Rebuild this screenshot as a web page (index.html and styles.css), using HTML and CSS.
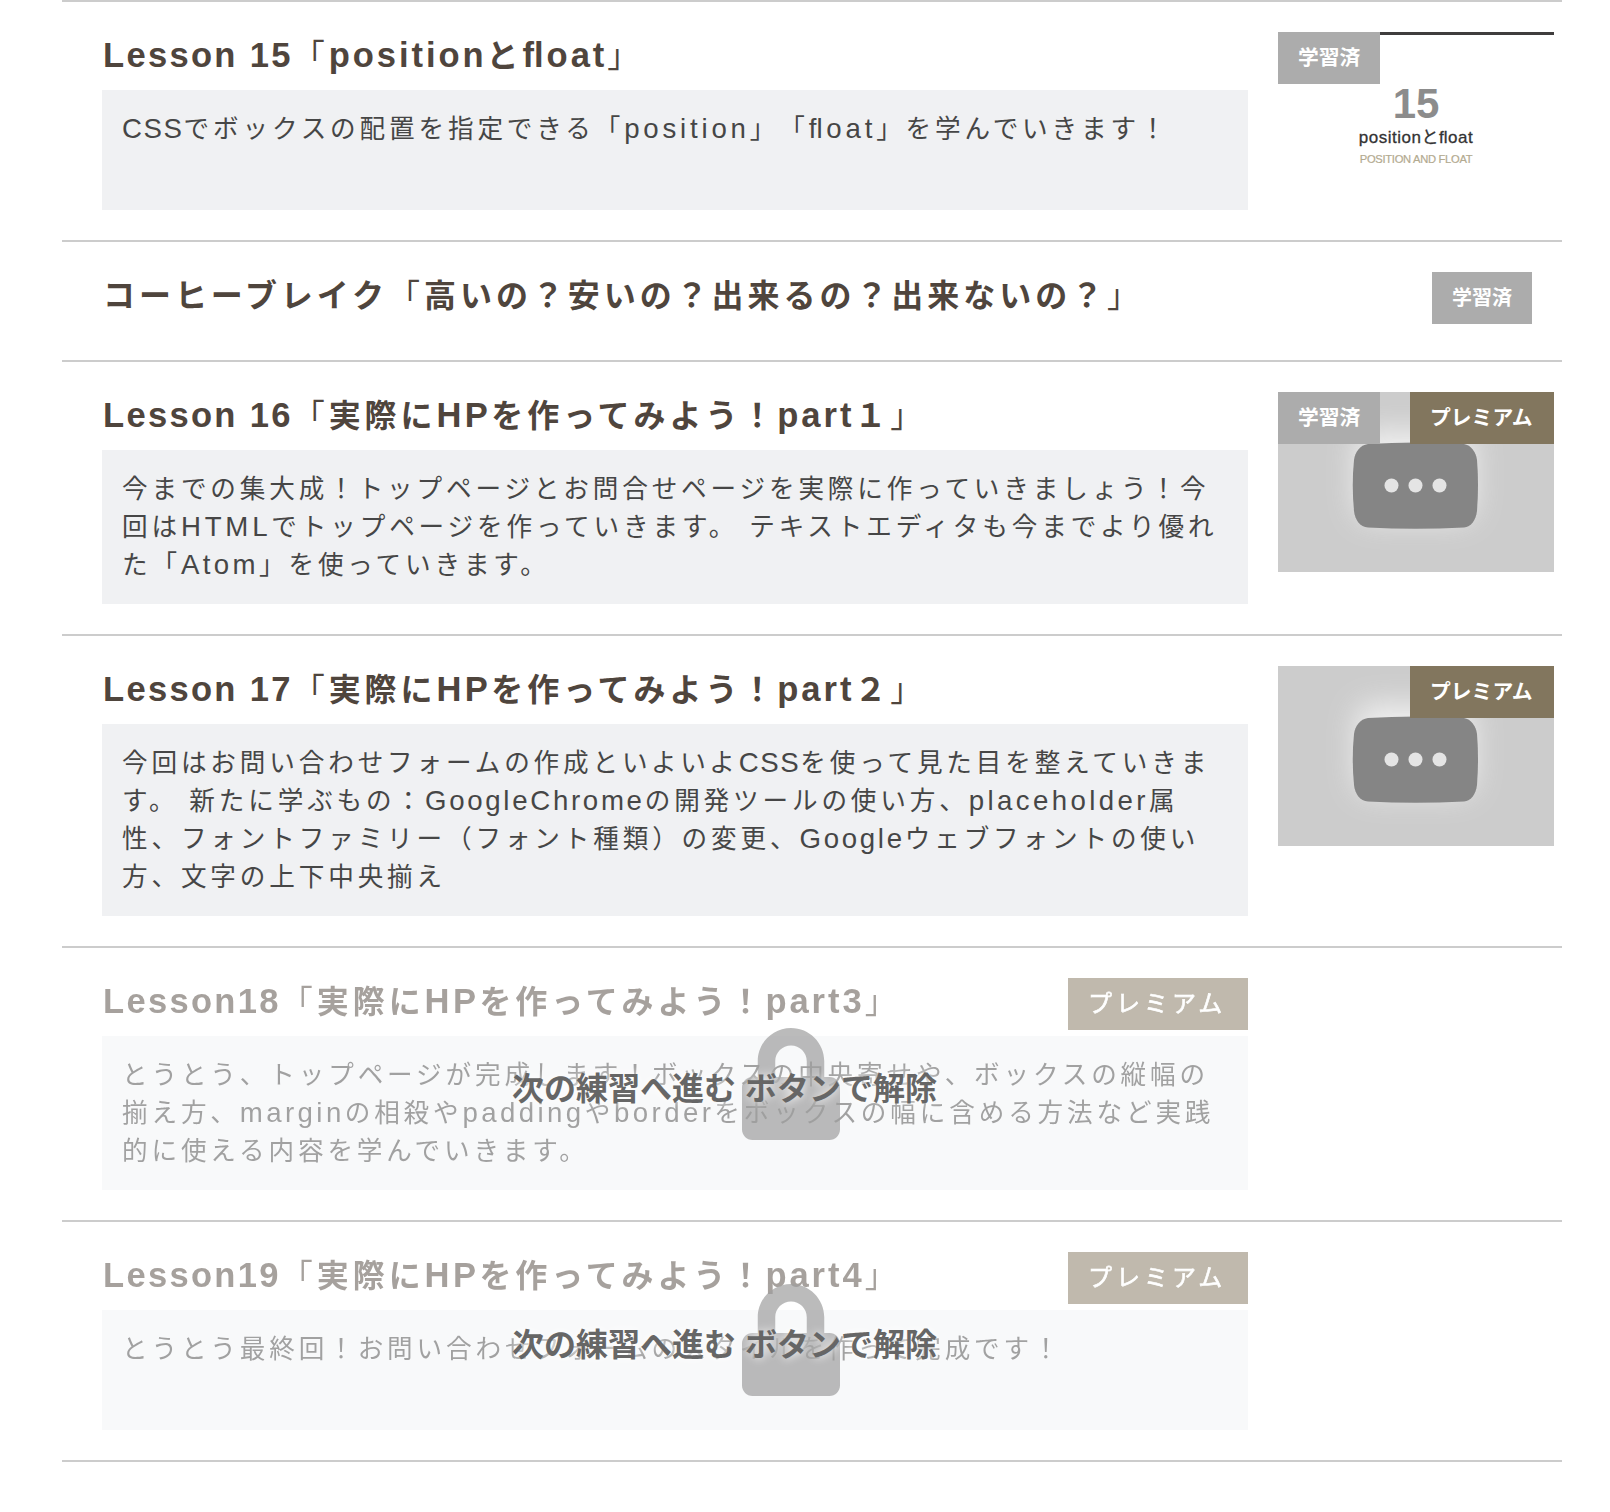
FILE: index.html
```html
<!DOCTYPE html>
<html lang="ja">
<head>
<meta charset="utf-8">
<title>Lesson</title>
<link rel="stylesheet" href="styles.css">
</head>
<body>
<svg width="0" height="0" class="defs" aria-hidden="true">
  <defs>
    <filter id="glow" x="-50%" y="-50%" width="200%" height="200%"><feGaussianBlur stdDeviation="15"/></filter>
    <filter id="soft" x="-10%" y="-10%" width="120%" height="120%"><feGaussianBlur stdDeviation="0.7"/></filter>
    <symbol id="video" viewBox="0 0 276 180">
      <rect width="276" height="180" fill="#ccc"/>
      <rect x="78" y="38" width="118" height="90" rx="16" fill="#fff" opacity=".7" filter="url(#glow)"/>
      <path d="M90 52Q137 49 186 52C193 53 198 60 199 68Q201 93 199 119C198 128 193 135 186 135.500Q137 138 90 135.500C82 135 77 128 76 119Q73.500 93 76 68C77 60 82 53 90 52Z" fill="#858585" filter="url(#soft)"/>
      <g fill="#e4e4e4" filter="url(#soft)"><circle cx="113.500" cy="93.500" r="7"/><circle cx="137.500" cy="93.500" r="7"/><circle cx="161.500" cy="93.500" r="7"/></g>
    </symbol>
    <symbol id="lock" viewBox="0 0 448 512">
      <path d="M400 224h-24v-72C376 68.200 307.800 0 224 0S72 68.200 72 152v72H48c-26.500 0-48 21.500-48 48v192c0 26.500 21.500 48 48 48h352c26.500 0 48-21.500 48-48V272c0-26.500-21.500-48-48-48zm-104 0H152v-72c0-39.700 32.300-72 72-72s72 32.300 72 72v72z"/>
    </symbol>
  </defs>
</svg>
<main class="lessons">
  <section class="row">
    <div class="main">
      <h2 class="title"><span class="en lead">Lesson 15</span><i>「</i><span class="en">position</span>と<span class="en"><span class="lig">f</span>loat</span><i>」</i></h2>
      <p class="desc"><span class="en caps">CSS</span>でボックスの配置を指定できる「<span class="en spaced">position</span>」「<span class="en spaced"><span class="lig">f</span>loat</span>」を学んでいきます！</p>
    </div>
    <div class="thumb slide">
      <b class="num">15</b>
      <span class="name">positionと<span class="lig">f</span>loat</span>
      <span class="sub">POSITION AND FLOAT</span>
      <span class="badge done">学習済</span>
    </div>
  </section>
  <section class="row">
    <div class="main">
      <h2 class="title">コーヒーブレイク<i>「</i>高いの？安いの？出来るの？出来ないの？<i>」</i></h2>
    </div>
    <span class="badge finished">学習済</span>
  </section>
  <section class="row">
    <div class="main">
      <h2 class="title"><span class="en lead">Lesson 16</span><i>「</i>実際に<span class="en wide">HP</span>を作ってみよう！<span class="en">part</span>１<i>」</i></h2>
      <p class="desc">今までの集大成！トップページとお問合せページを実際に作っていきましょう！今<br>回は<span class="en wide">HTML</span>でトップページを作っていきます。 テキストエディタも今までより優れ<br>た「<span class="en">Atom</span>」を使っていきます。</p>
    </div>
    <div class="thumb">
      <svg width="276" height="180"><use href="#video"/></svg>
      <span class="badge done">学習済</span>
      <span class="badge premium">プレミアム</span>
    </div>
  </section>
  <section class="row">
    <div class="main">
      <h2 class="title"><span class="en lead">Lesson 17</span><i>「</i>実際に<span class="en wide">HP</span>を作ってみよう！<span class="en">part</span>２<i>」</i></h2>
      <p class="desc">今回はお問い合わせフォームの作成といよいよ<span class="en caps">CSS</span>を使って見た目を整えていきま<br>す。 新たに学ぶもの：<span class="en round">GoogleChrome</span>の開発ツールの使い方、<span class="en">placeholder</span>属<br>性、フォントファミリー（フォント種類）の変更、<span class="en round">Google</span>ウェブフォントの使い<br>方、文字の上下中央揃え</p>
    </div>
    <div class="thumb">
      <svg width="276" height="180"><use href="#video"/></svg>
      <span class="badge premium">プレミアム</span>
    </div>
  </section>
  <section class="row locked">
    <div class="main">
      <div class="head"><h2 class="title"><span class="en lead">Lesson18</span><i>「</i>実際に<span class="en wide">HP</span>を作ってみよう！<span class="en">part3</span><i>」</i></h2><span class="tag">プレミアム</span></div>
      <p class="desc">とうとう、トップページが完成します！ボックスの中央寄せや、ボックスの縦幅の<br>揃え方、<span class="en">margin</span>の相殺や<span class="en">padding</span>や<span class="en">border</span>をボックスの幅に含める方法など実践<br>的に使える内容を学んでいきます。</p>
    </div>
    <svg class="lock" width="98" height="112"><use href="#lock"/></svg>
    <p class="notice">次の練習へ進む ボタンで解除</p>
  </section>
  <section class="row locked">
    <div class="main">
      <div class="head"><h2 class="title"><span class="en lead">Lesson19</span><i>「</i>実際に<span class="en wide">HP</span>を作ってみよう！<span class="en">part4</span><i>」</i></h2><span class="tag">プレミアム</span></div>
      <p class="desc">とうとう最終回！お問い合わせフォームのスタイルを作って完成です！</p>
    </div>
    <svg class="lock" width="98" height="112"><use href="#lock"/></svg>
    <p class="notice">次の練習へ進む ボタンで解除</p>
  </section>
</main>
</body>
</html>
```
FILE: styles.css
```css
* { box-sizing: border-box; }
body {
  margin: 0;
  background: #fff;
  font-family: "Liberation Sans", "Noto Sans CJK JP", sans-serif;
  text-spacing-trim: space-all;
  color: #464646;
}
h2, p { margin: 0; }
.defs { position: absolute; }
.lessons { width: 1500px; margin-left: 62px; border-bottom: 2px solid #ccc; }
.row {
  position: relative;
  display: flex;
  align-items: flex-start;
  border-top: 2px solid #ccc;
  padding: 30px 8px 30px 40px;
}
.main { width: 1146px; margin-right: 30px; }
.title {
  height: 58px;
  padding-left: 1px;
  font-size: 32px;
  line-height: 49px;
  letter-spacing: 3.95px;
  color: #4f453d;
  white-space: nowrap;
}
.title i { font-style: normal; font-weight: 400; }
.desc {
  min-height: 120px;
  padding: 20px;
  background: #f0f1f3;
  font-size: 25.6px;
  line-height: 38px;
  letter-spacing: 3.86px;
  white-space: nowrap;
}
.en { font-size: 1.08em; line-height: 1; letter-spacing: 3.4px; }
.caps { letter-spacing: 1.6px; }
.wide { letter-spacing: 3.8px; }
.round { letter-spacing: 2.7px; }
.spaced { letter-spacing: 3.8px; }
.title .en { letter-spacing: 2.95px; }
.title .lead { letter-spacing: 2.3px; }
.title .wide { letter-spacing: 3.4px; }
.lig, .title .lig { letter-spacing: 0; }
.badge {
  height: 52px;
  padding: 0 20px;
  line-height: 52px;
  font-size: 20.8px;
  font-weight: 700;
  color: #fff;
  white-space: nowrap;
}
.thumb { position: relative; width: 276px; height: 180px; flex: none; margin-bottom: -10px; }
.thumb svg { display: block; }
.thumb .badge { position: absolute; top: 0; }
.done { left: 0; width: 102px; background: #acacac; }
.premium { right: 0; width: 144px; background: #82765e; }
.finished { margin: 0 22px 0 auto; background: #acacac; font-size: 20px; }
.slide {
  display: flex;
  flex-direction: column;
  align-items: center;
  border-top: 3px solid #3f3d3d;
  padding-top: 46px;
}
.thumb.slide .badge { top: -3px; }
.num { font-size: 42px; line-height: 46px; color: #8c8c8c; }
.name { font-size: 17px; line-height: 22px; letter-spacing: .5px; color: #333; -webkit-text-stroke: .3px #333; }
.sub { font-size: 11.2px; line-height: 20px; letter-spacing: -.3px; color: #b3aa90; -webkit-text-stroke: .2px #b3aa90; }
.head { display: flex; justify-content: space-between; }
.tag {
  width: 180px;
  height: 52px;
  padding-left: 20px;
  background: #82765e;
  color: #fff;
  font-size: 24px;
  line-height: 52px;
  letter-spacing: 4px;
  -webkit-text-stroke: .6px #fff;
}
.locked .main { opacity: .5; }
.locked .desc { background: #f2f4f7; }
.lock {
  position: absolute;
  left: 680px;
  top: calc(53% - 64px);
  fill: #9f9f9f;
  opacity: .7;
}
.notice {
  position: absolute;
  left: 450px;
  top: calc(53% - 27px);
  font-size: 32px;
  line-height: 48px;
  font-weight: 700;
  color: #666;
  white-space: nowrap;
  text-shadow: 0 0 10px #fff;
}
```
